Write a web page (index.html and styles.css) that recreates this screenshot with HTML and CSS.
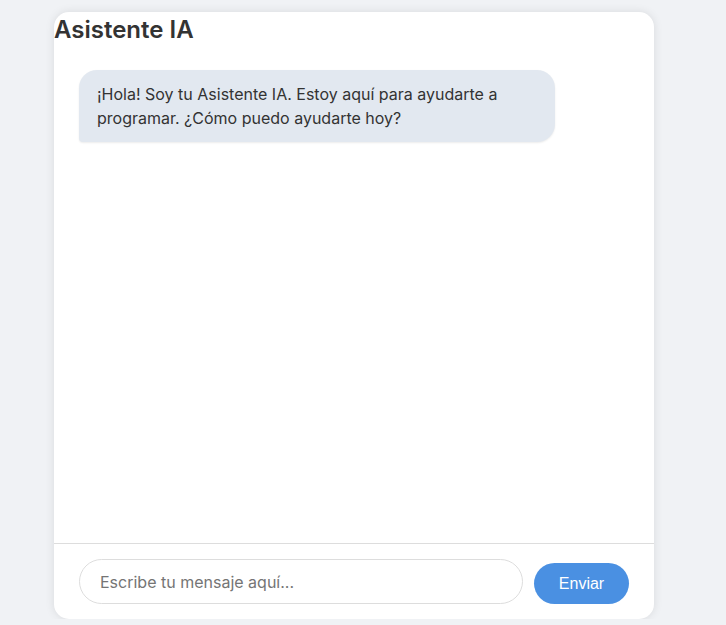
FILE: index.html
```html
<!DOCTYPE html>
<html lang="es">
<head>
<meta charset="utf-8">
<title>Asistente IA</title>
<link rel="stylesheet" href="styles.css">
</head>
<body>
<div class="chat">
  <h2 class="chat-title">Asistente IA</h2>
  <div class="messages">
    <div class="bubble bot">¡Hola! Soy tu Asistente IA. Estoy aquí para ayudarte a programar. ¿Cómo puedo ayudarte hoy?</div>
  </div>
  <div class="composer">
    <input class="composer-input" type="text" placeholder="Escribe tu mensaje aquí...">
    <button class="composer-send" type="button">Enviar</button>
  </div>
</div>
</body>
</html>
```
FILE: styles.css
```css
html, body {
  margin: 0;
  padding: 0;
  background: #f0f2f5;
}
body {
  font-family: Inter, "Noto Sans", sans-serif;
  color: #333;
  padding: 12px 0 0 54px;
}
.chat {
  width: 600px;
  height: 607px;
  background: #fff;
  border-radius: 15px;
  box-shadow: 0 0 10px rgba(0, 0, 0, 0.1);
  display: flex;
  flex-direction: column;
  overflow: hidden;
}
.chat-title {
  margin: 3px 0 0 0;
  font-size: 24px;
  font-weight: 600;
  line-height: 29px;
  color: #333;
}
.messages {
  flex: 1;
  padding: 26px 25px 25px;
}
.bubble {
  max-width: 80%;
  width: fit-content;
  padding: 12px 18px;
  font-size: 16px;
  line-height: 24px;
  border-radius: 18px 18px 18px 4px;
}
.bubble.bot {
  background: #e2e8f0;
  color: #333;
  box-shadow: 0 1px 2px rgba(0, 0, 0, 0.08);
}
.composer {
  border-top: 1px solid #ddd;
  padding: 15px 25px;
  display: flex;
  align-items: flex-end;
  gap: 11px;
}
.composer-input {
  flex: 1;
  height: 45px;
  box-sizing: border-box;
  border: 1px solid #ddd;
  border-radius: 23px;
  padding: 0 20px;
  font-family: Inter, "Noto Sans", sans-serif;
  font-size: 16px;
  color: #333;
  outline: none;
}
.composer-input::placeholder {
  color: #757575;
}
.composer-send {
  width: 95px;
  height: 41px;
  border: none;
  border-radius: 21px;
  background: #4a90e2;
  color: #fff;
  font-family: "Liberation Sans", Arial, sans-serif;
  font-size: 16px;
  cursor: pointer;
}
```
